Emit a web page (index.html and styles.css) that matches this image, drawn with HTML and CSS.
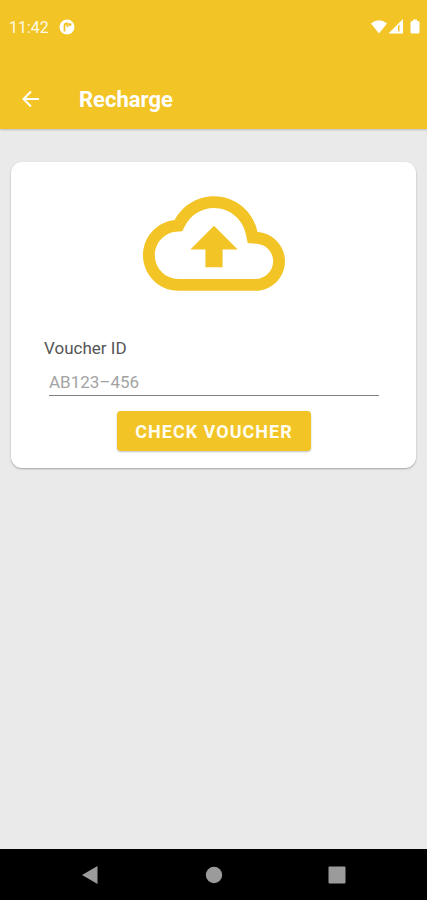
FILE: index.html
```html
<!DOCTYPE html>
<html lang="en">
<head>
<meta charset="utf-8">
<meta name="viewport" content="width=device-width, initial-scale=1">
<title>Recharge</title>
<link rel="stylesheet" href="styles.css">
</head>
<body>
<header class="top">
  <div class="status">
    <span class="clock">11:42</span>
    <svg class="badge" viewBox="0 0 16 16" aria-hidden="true">
      <circle cx="8" cy="8" r="7.500" fill="#fff"/>
      <path d="M5.500 12.500V7Q5.500 4.500 8 4.500H8.500V8" fill="none" stroke="#f2c426" stroke-width="1.800"/>
      <circle cx="11" cy="5.500" r="1.500" fill="#f2c426"/>
    </svg>
    <svg class="signals" viewBox="0 0 50 16" aria-hidden="true">
      <path d="M0 4.500Q8-2 16 4.500L8 14.500Z" fill="#fff"/>
      <path d="M17.500 14.500L32 0V14.500Z" fill="#fff"/>
      <path d="M27 7V12.500H28.500V5.500Z" fill="#f2c426"/>
      <path d="M42 0.500H46V2H47Q48.500 2 48.500 3.500V13Q48.500 14.500 47 14.500H41Q39.500 14.500 39.500 13V3.500Q39.500 2 41 2H42Z" fill="#fff"/>
    </svg>
  </div>
  <div class="bar">
    <button class="back" type="button" aria-label="Back">
      <svg viewBox="0 0 24 24" aria-hidden="true"><path d="M20 12H5M12 4.500L4.500 12l7.500 7.500" fill="none" stroke="#fff" stroke-width="2"/></svg>
    </button>
    <h1 class="title">Recharge</h1>
  </div>
</header>
<main class="content">
  <form class="card">
    <svg class="cloud" viewBox="0 4 24 16" aria-hidden="true">
      <path fill="#f2c426" d="M19.350 10.040C18.670 6.590 15.640 4 12 4 9.110 4 6.600 5.640 5.350 8.040 2.340 8.360 0 10.910 0 14c0 3.310 2.690 6 6 6h13c2.760 0 5-2.240 5-5 0-2.640-2.050-4.780-4.650-4.960zM19 18H6c-2.210 0-4-1.790-4-4 0-2.050 1.530-3.760 3.560-3.970l1.070-.110.500-.950C8.080 7.140 9.940 6 12 6c2.620 0 4.880 1.860 5.390 4.430l.300 1.500 1.530.110c1.560.100 2.780 1.410 2.780 2.960 0 1.650-1.350 3-3 3zM8 13h2.550v3h2.900v-3H16l-4-4z"/>
    </svg>
    <label class="label" for="voucher">Voucher ID</label>
    <input class="field" id="voucher" type="text" placeholder="AB123–456">
    <button class="submit" type="button">CHECK VOUCHER</button>
  </form>
</main>
<nav class="nav" aria-label="System">
  <button type="button" aria-label="Back"><svg viewBox="0 0 18 18"><path d="M16.500 0V18L1 9Z" fill="#9b9b9b"/></svg></button>
  <button type="button" aria-label="Home"><svg viewBox="0 0 18 18"><circle cx="9" cy="9" r="8.200" fill="#9b9b9b"/></svg></button>
  <button type="button" aria-label="Recent apps"><svg viewBox="0 0 18 18"><rect x="0.500" y="0.500" width="17" height="17" rx="1" fill="#9b9b9b"/></svg></button>
</nav>
</body>
</html>
```
FILE: styles.css
```css
* { box-sizing: border-box; }
body {
  margin: 0;
  min-height: 100vh;
  display: flex;
  flex-direction: column;
  background: #eaeaea;
  font-family: Roboto, "Liberation Sans", sans-serif;
}
button {
  border: 0;
  padding: 0;
  background: none;
  font-family: inherit;
}
svg { display: block; }
.top {
  background: #f2c426;
  color: #fff;
  padding-bottom: 7px;
  box-shadow: 0 1px 2px rgba(0, 0, 0, 0.2);
}
.status {
  display: flex;
  align-items: center;
  height: 54px;
  padding: 0 6px 0 9px;
}
.clock { font-size: 16px; color: #fffae6; }
.badge { width: 16px; height: 16px; margin-left: 10px; }
.signals { width: 50px; height: 16px; margin-left: auto; }
.bar {
  display: flex;
  align-items: center;
  height: 68px;
  padding: 21px 19px 0;
}
.back svg { width: 24px; height: 24px; }
.title {
  margin: 3px 0 0 36px;
  font-size: 22px;
  line-height: 24px;
  font-weight: 700;
}
.content { flex: 1; padding: 33px 11px; }
.card {
  display: flex;
  flex-direction: column;
  padding: 34px 32px 17px 33px;
  border-radius: 11px;
  background: #fff;
  box-shadow: 0 1px 2px rgba(0, 0, 0, 0.3);
}
.cloud {
  width: 142px;
  height: 95px;
  align-self: center;
}
.label {
  margin-top: 47px;
  font-size: 17px;
  line-height: 20px;
  color: #555;
}
.field {
  margin: 12px 5px 0;
  height: 26px;
  padding: 0 0 2px;
  border: 0;
  border-bottom: 1px solid #808080;
  border-radius: 0;
  outline: 0;
  background: none;
  font-family: inherit;
  font-size: 17px;
  color: #444;
}
.field::placeholder { color: #a3a3a3; opacity: 1; }
.submit {
  align-self: center;
  margin-top: 15px;
  height: 40px;
  padding: 0 18px;
  border-radius: 4px;
  background: #f2c426;
  color: #fffdf0;
  font-size: 18px;
  font-weight: 700;
  letter-spacing: 1px;
  box-shadow: 0 1px 2px rgba(0, 0, 0, 0.25);
}
.nav {
  display: flex;
  justify-content: space-between;
  align-items: center;
  height: 51px;
  padding: 0 81px;
  background: #000;
}
.nav svg { width: 18px; height: 18px; }
```
